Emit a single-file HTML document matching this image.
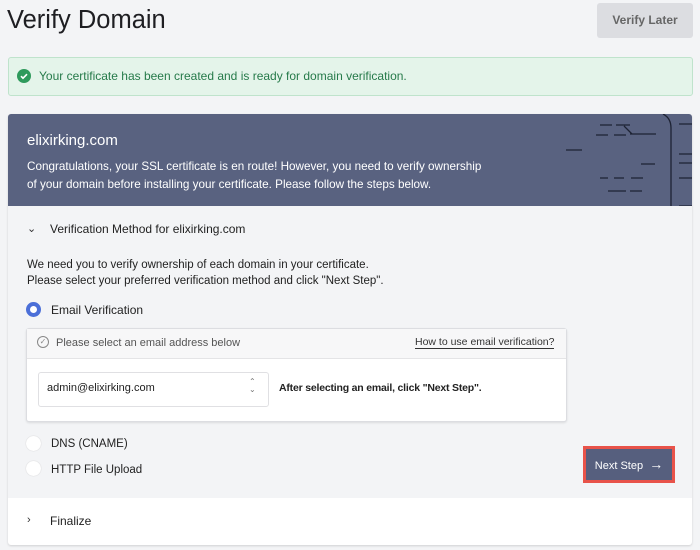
<html><head><style>
body{margin:0;width:700px;height:550px;background:#f3f4f6;font-family:"Liberation Sans",sans-serif;position:relative;overflow:hidden;color:#222}
.a{position:absolute}
</style></head><body>
<div class="a" style="left:7px;top:6px;font-size:25.5px;color:#1e1e22">Verify Domain</div>
<div class="a" style="left:597px;top:3px;width:96px;height:35px;background:#dcdde1;border-radius:3px;font-size:12px;font-weight:bold;color:#666;text-align:center;line-height:35px">Verify Later</div>
<div class="a" style="left:8px;top:57px;width:683px;height:37px;background:#e4f4ea;border:1px solid #bfe3cc;border-radius:3px"></div>
<svg class="a" style="left:17px;top:69px" width="14" height="14"><circle cx="7" cy="7" r="7" fill="#2e9a5c"/><path d="M4 7.2l2 2 4-4" stroke="#fff" stroke-width="1.6" fill="none"/></svg>
<div class="a" style="left:39px;top:69px;font-size:12px;color:#267a4a">Your certificate has been created and is ready for domain verification.</div>
<div class="a" style="left:8px;top:114px;width:684px;height:431px;background:#fff;border-radius:3px;box-shadow:0 1px 2px rgba(0,0,0,.15);overflow:hidden">
 <div class="a" style="left:0;top:0;width:684px;height:92px;background:#596280"></div>
 <svg class="a" style="left:540px;top:0" width="144" height="92" stroke="#1d2233" stroke-width="1.3" fill="none"><path d="M115 0q8 4 8 14v78"/><path d="M52 11h12M68 11h14M76 12l8 8M82 20h26M48 21h12M66 21h12M18 36h16M93 50h14M83 64h12M52 64h8M66 64h10M60 77h18M82 77h12M131 10h13M131 49h13M131 64h13M131 92h13M131 40h13"/></svg>
 <div class="a" style="left:19px;top:18px;font-size:15px;color:#fff">elixirking.com</div>
 <div class="a" style="left:19px;top:44px;font-size:11.7px;line-height:18px;color:#fff">Congratulations, your SSL certificate is en route! However, you need to verify ownership<br>of your domain before installing your certificate. Please follow the steps below.</div>
 <div class="a" style="left:0;top:92px;width:684px;height:292px;background:#f3f4f6"></div>
 <div class="a" style="left:19px;top:108px;font-size:11px;color:#333">⌄</div>
 <div class="a" style="left:42px;top:108px;font-size:12px;color:#222">Verification Method for elixirking.com</div>
 <div class="a" style="left:19px;top:143px;font-size:11.5px;line-height:16px;color:#222">We need you to verify ownership of each domain in your certificate.<br>Please select your preferred verification method and click "Next Step".</div>
 <div class="a" style="left:18px;top:188px;width:7px;height:7px;border:4px solid #4b6fd8;border-radius:50%;background:#fff"></div>
 <div class="a" style="left:43px;top:189px;font-size:12px">Email Verification</div>
 <div class="a" style="left:18px;top:214px;width:539px;height:92px;background:#fff;border:1px solid #dcdde1;border-radius:3px;box-shadow:0 1px 2px rgba(0,0,0,.1)">
  <div style="height:29px;background:#f7f7f8;border-bottom:1px solid #e4e4e6"></div>
  <div class="a" style="left:10px;top:7px;width:10px;height:10px;border:1px solid #888;border-radius:50%;font-size:8px;line-height:10px;text-align:center;color:#888">✓</div>
  <div class="a" style="left:29px;top:8px;font-size:11px;color:#555">Please select an email address below</div>
  <div class="a" style="left:388px;top:7px;font-size:10.5px;color:#333;border-bottom:1px solid #333">How to use email verification?</div>
  <div class="a" style="left:11px;top:43px;width:229px;height:33px;border:1px solid #e0e0e3;border-radius:3px;background:#fff"></div>
  <div class="a" style="left:20px;top:53px;font-size:11px">admin@elixirking.com</div>
  <div class="a" style="left:222px;top:49px;font-size:8px;color:#777;line-height:8px">⌃<br>⌄</div>
  <div class="a" style="left:252px;top:53px;font-size:10.5px;font-weight:bold;color:#222;letter-spacing:-0.2px">After selecting an email, click "Next Step".</div>
 </div>
 <div class="a" style="left:18px;top:322px;width:15px;height:15px;border-radius:50%;background:#fff;box-shadow:0 0 1px #bbb"></div>
 <div class="a" style="left:43px;top:324px;font-size:11.5px">DNS (CNAME)</div>
 <div class="a" style="left:18px;top:347px;width:15px;height:15px;border-radius:50%;background:#fff;box-shadow:0 0 1px #bbb"></div>
 <div class="a" style="left:43px;top:350px;font-size:11.5px">HTTP File Upload</div>
 <div class="a" style="left:575px;top:332px;width:86px;height:31px;background:#565f7e;border:3px solid #e8534a;color:#fff;font-size:11px;line-height:31px;text-align:center">Next Step &nbsp;<span style="font-size:14px">→</span></div>
 <div class="a" style="left:19px;top:400px;font-size:11px;color:#333">›</div>
 <div class="a" style="left:42px;top:400px;font-size:12px">Finalize</div>
</div>
</body></html>
